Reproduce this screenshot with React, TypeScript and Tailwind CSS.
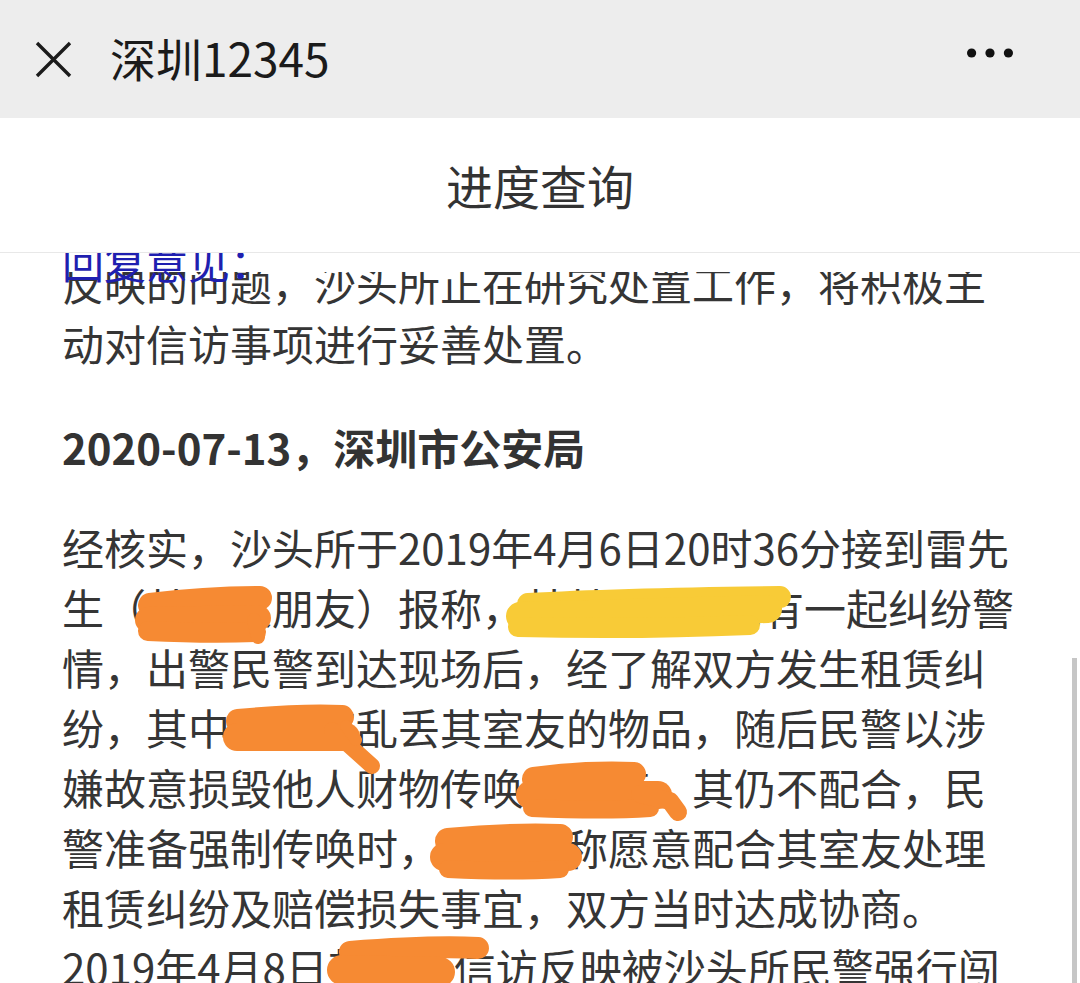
import React from "react";

const FONT = "font-['Noto_Sans_CJK_SC','Noto_Sans',sans-serif]";

// lines are broken by hand so the wrap matches the screenshot
const firstLines = ["反映的问题，沙头所正在研究处置工作，将积极主", "动对信访事项进行妥善处置。"];

const bodyLines = [
  "经核实，沙头所于2019年4月6日20时36分接到雷先",
  "生（某某某朋友）报称，某某小区302有一起纠纷警",
  "情，出警民警到达现场后，经了解双方发生租赁纠",
  "纷，其中某某某乱丢其室友的物品，随后民警以涉",
  "嫌故意损毁他人财物传唤某某某，其仍不配合，民",
  "警准备强制传唤时，某某又称愿意配合其室友处理",
  "租赁纠纷及赔偿损失事宜，双方当时达成协商。",
  "2019年4月8日某某某信访反映被沙头所民警强行闯",
];

function CloseIcon() {
  return (
    <svg width="37" height="37" viewBox="0 0 37 37" fill="none">
      <path d="M2 2L35 35M35 2L2 35" stroke="#1b1b1b" strokeWidth="3.4" strokeLinecap="butt" />
    </svg>
  );
}

function MoreIcon() {
  return (
    <svg width="46" height="10" viewBox="0 0 46 10">
      <circle cx="4.6" cy="5" r="4.6" fill="#111" />
      <circle cx="23" cy="5" r="4.6" fill="#111" />
      <circle cx="41.4" cy="5" r="4.6" fill="#111" />
    </svg>
  );
}

// hand-drawn redaction scribbles laid over the text
function Scribbles() {
  const orange = "#f68a33";
  const yellow = "#f8cb37";
  return (
    <svg
      className="absolute left-0 top-0 pointer-events-none"
      width="1080"
      height="983"
      viewBox="0 0 1080 983"
      fill="none"
      strokeLinecap="round"
      strokeLinejoin="round"
    >
      {/* 生（ ... 朋友 */}
      <g stroke={orange}>
        <path d="M150 605 C 190 600, 230 598, 260 598" strokeWidth="24" />
        <path d="M148 620 L 258 618" strokeWidth="26" />
        <path d="M148 631 C 190 633, 230 633, 256 632" strokeWidth="20" />
        <path d="M254 620 L 258 637" strokeWidth="14" />
      </g>
      {/* yellow */}
      <g stroke={yellow}>
        <path d="M528 604 C 600 600, 700 598, 780 597" strokeWidth="22" />
        <path d="M520 616 C 620 613, 700 611, 768 609" strokeWidth="28" />
        <path d="M518 627 C 600 629, 680 628, 750 625" strokeWidth="20" />
      </g>
      {/* 其中 ... 乱 */}
      <g stroke={orange}>
        <path d="M238 721 C 280 717, 320 716, 342 717" strokeWidth="24" />
        <path d="M237 737 L 346 737" strokeWidth="28" />
        <path d="M332 730 L 352 748 L 372 766" strokeWidth="16" />
        <path d="M346 726 L 356 740" strokeWidth="12" />
      </g>
      {/* 传唤 ... 其仍 */}
      <g stroke={orange}>
        <path d="M534 779 C 570 774, 610 773, 634 774" strokeWidth="24" />
        <path d="M530 795 L 658 795" strokeWidth="28" />
        <path d="M532 808 C 580 810, 620 810, 650 808" strokeWidth="18" />
        <path d="M640 794 L 670 801 L 678 812" strokeWidth="18" />
      </g>
      {/* 时， ... 称 */}
      <g stroke={orange}>
        <path d="M448 841 C 490 837, 530 836, 560 837" strokeWidth="26" />
        <path d="M444 857 L 568 857" strokeWidth="28" />
        <path d="M448 869 C 490 871, 530 871, 560 869" strokeWidth="18" />
      </g>
      {/* 8日 ... 信访 */}
      <g stroke={orange}>
        <path d="M350 952 C 400 948, 440 946, 478 948" strokeWidth="22" />
        <path d="M342 970 L 440 972" strokeWidth="30" />
      </g>
    </svg>
  );
}

export default function App() {
  return (
    <div className={`relative w-[1080px] h-[983px] overflow-hidden bg-white flex flex-col ${FONT}`}>
      {/* Top bar */}
      <header className="h-[118px] bg-[#ededed] flex items-center pl-[35px] pr-[67px] flex-shrink-0">
        <CloseIcon />
        <span className="ml-[38px] text-[46px] leading-none font-normal text-[#1b1b1b] -mt-[4px]">深圳12345</span>
        <div className="ml-auto -mt-[12px]">
          <MoreIcon />
        </div>
      </header>

      {/* Page title */}
      <div className="h-[135px] flex-shrink-0 bg-white border-b border-[#e8e8e8] flex items-center justify-center">
        <span className="text-[47px] leading-none text-[#333] -mt-[2px]">进度查询</span>
      </div>

      {/* Content */}
      <main className="relative flex-1 overflow-hidden px-[62px] text-[42px] leading-[60px] text-[#353535]">
        <div className="relative">
          {firstLines.map((line) => (
            <div key={line} className="whitespace-nowrap">
              {line}
            </div>
          ))}
          {/* the scrolled-under line is half hidden */}
          <div className="absolute left-0 right-0 top-0 h-[19px] bg-white" />
          <div className="absolute left-0 top-[-22px] text-[#1f1fb0] whitespace-nowrap">回复意见：</div>
        </div>

        <h3 className="mt-[44px] font-bold text-[#333] whitespace-nowrap">2020-07-13，深圳市公安局</h3>

        <div className="mt-[40px]">
          {bodyLines.map((line) => (
            <div key={line} className="whitespace-nowrap">
              {line}
            </div>
          ))}
        </div>

        {/* scrollbar */}
        <div className="absolute right-[3px] top-[405px] w-[5px] h-[400px] bg-[#c6c6c6]" />
      </main>

      <Scribbles />
    </div>
  );
}
